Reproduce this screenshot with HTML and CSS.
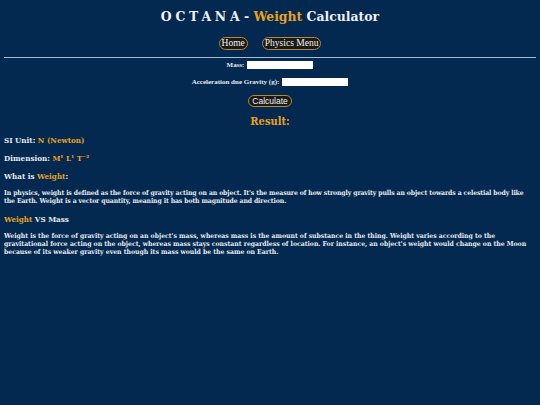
FILE: index.html
```html
<!DOCTYPE html>
<html lang="en">
<head>
<meta charset="utf-8">
<title>OCTANA - Weight Calculator</title>
<link rel="stylesheet" href="styles.css">
</head>
<body>
<header class="top">
  <h1 class="title"><span class="spaced">OCTAN</span>A - <span class="hl">Weight</span> Calculator</h1>
  <nav class="nav">
    <button class="pill serif">Home</button>
    <button class="pill serif">Physics Menu</button>
  </nav>
</header>
<hr class="rule">
<form class="calc">
  <label class="row">Mass: <input class="field" type="text"></label>
  <label class="row">Acceleration due Gravity (g): <input class="field" type="text"></label>
  <button type="button" class="pill sans">Calculate</button>
  <h2 class="result">Result:</h2>
</form>
<section class="info">
  <h3 class="item">SI Unit: <span class="hl">N (Newton)</span></h3>
  <h3 class="item">Dimension: <span class="hl">M¹ L¹ T⁻²</span></h3>
  <h3 class="item">What is <span class="hl">Weight</span>:</h3>
  <p class="text tight">In physics, weight is defined as the force of gravity acting on an object. It's the measure of how strongly gravity pulls an object towards a celestial body like the Earth. Weight is a vector quantity, meaning it has both magnitude and direction.</p>
  <h3 class="item"><span class="hl">Weight</span> VS Mass</h3>
  <p class="text">Weight is the force of gravity acting on an object's mass, whereas mass is the amount of substance in the thing. Weight varies according to the gravitational force acting on the object, whereas mass stays constant regardless of location. For instance, an object's weight would change on the Moon because of its weaker gravity even though its mass would be the same on Earth.</p>
</section>
</body>
</html>
```

FILE: styles.css
```css
html { background: #032950; }
body {
  margin: 4px;
  background: #032950;
  color: #e6eaee;
  font-family: "DejaVu Serif Condensed", "DejaVu Serif", Georgia, serif;
  font-stretch: condensed;
  font-weight: bold;
}
.top { text-align: center; }
.title {
  margin: 0;
  padding-top: 2px;
  font-size: 13.8px;
  line-height: 20px;
  font-weight: bold;
  color: #eef0f2;
}
.spaced { letter-spacing: 3.8px; }
.hl { color: #e8a21e; }
.nav {
  margin-top: 11px;
  display: flex;
  justify-content: center;
  gap: 14px;
}
.pill {
  background: #1c1a16;
  color: #f2f2f2;
  border: 1px solid #b58838;
  border-radius: 8px;
  padding: 0 2px;
  height: 13px;
  line-height: 11px;
  font-size: 9.5px;
  font-weight: normal;
  font-stretch: normal;
}
.serif { font-family: "Liberation Serif", "Times New Roman", serif; }
.sans { font-family: "Liberation Sans", Arial, sans-serif; font-size: 8.5px; padding: 0 3px; height: 12px; }
.rule {
  margin: 7px -1px 0;
  border: 0;
  height: 1px;
  background: #a7bdd4;
}
.calc {
  display: flex;
  flex-direction: column;
  align-items: center;
  font-family: "Liberation Serif", "Times New Roman", serif;
  font-stretch: normal;
  font-size: 7px;
  font-weight: bold;
}
.row {
  display: flex;
  align-items: center;
  gap: 3px;
  height: 8px;
  line-height: 8px;
  margin-top: 3px;
}
.row + .row { margin-top: 9px; }
.field {
  width: 66px;
  height: 8px;
  border: 0;
  padding: 0;
  margin: 0;
  background: #fff;
}
.calc .pill { margin-top: 9px; }
.result {
  margin: 8px 0 0;
  font-family: "DejaVu Serif Condensed", "DejaVu Serif", Georgia, serif;
  font-stretch: condensed;
  font-size: 11px;
  line-height: 13px;
  color: #e8a21e;
}
.info { margin-top: 7px; }
.item {
  margin: 0 0 8px;
  font-size: 8px;
  line-height: 10px;
}
.text {
  margin: 0 0 9px;
  font-size: 6.8px;
  line-height: 8px;
}
.tight { letter-spacing: -0.1px; }
```
